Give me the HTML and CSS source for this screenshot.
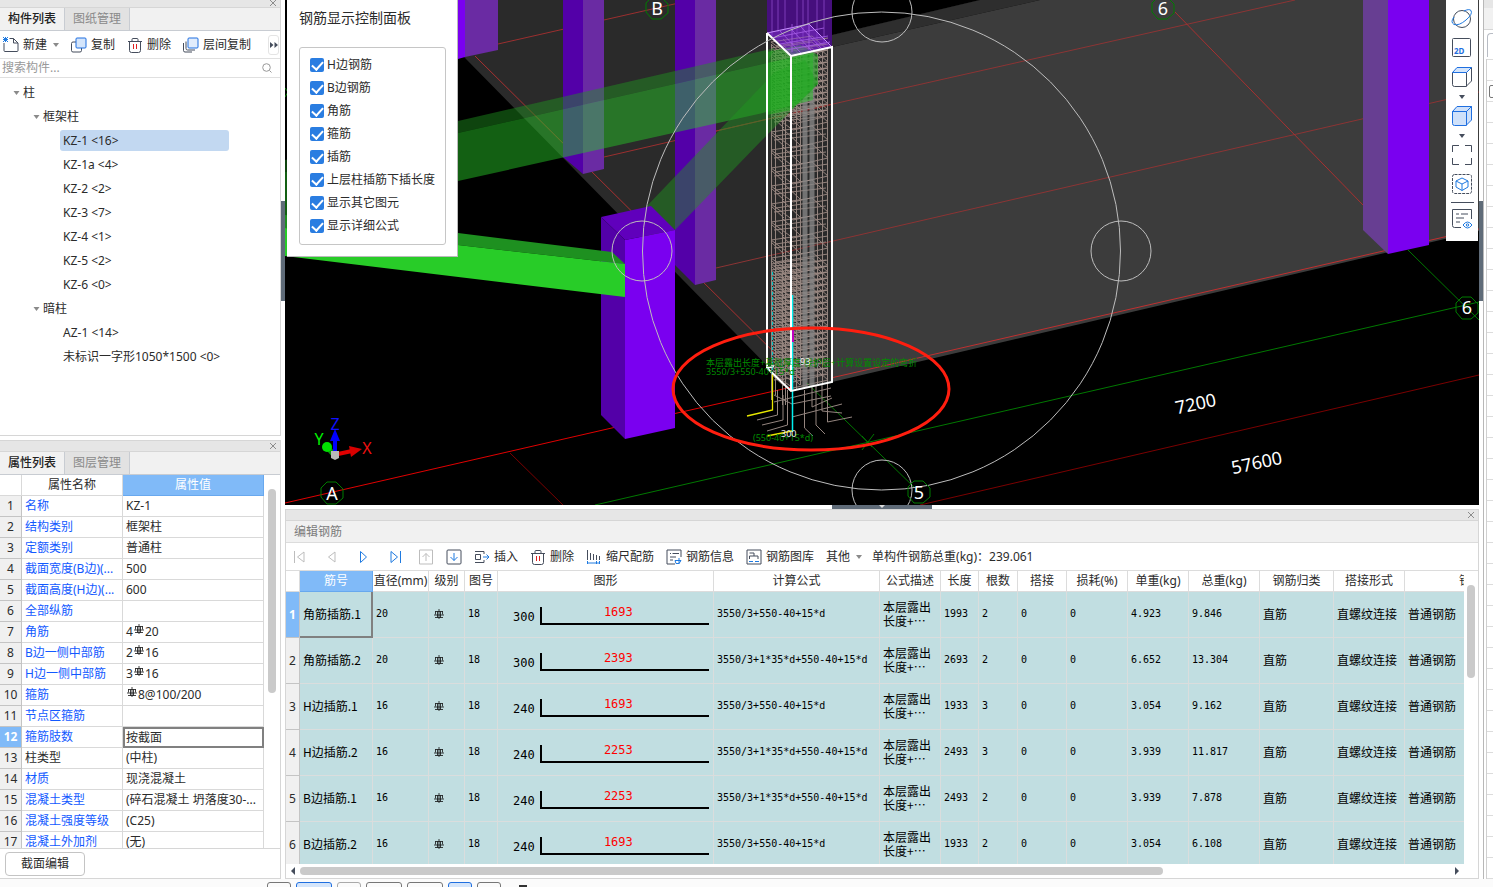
FILE: index.html
```html
<!DOCTYPE html>
<html lang="zh-CN">
<head>
    <meta charset="UTF-8">
    <meta name="viewport" content="width=device-width, initial-scale=1.0">
    <title>编辑钢筋</title>
    <link rel="stylesheet" href="styles.css">
</head>
<body>

    <!-- shared icons -->
    <svg class="defs" xmlns="http://www.w3.org/2000/svg">
        <symbol id="i-close" viewBox="0 0 8 8"><path d="M1 1l6 6M7 1l-6 6" stroke="#8c8c8c" fill="none"/></symbol>
        <symbol id="i-trash" viewBox="0 0 16 16"><path d="M1 4.500h14M5 4V2.500q0-1 1-1h4q1 0 1 1V4M2.500 4.500v9q0 2 2 2h7q2 0 2-2v-9" fill="none" stroke="#454d5c"/><path d="M6.500 7v5M9.500 7v5" stroke="#e02020"/></symbol>
        <symbol id="i-rebar" viewBox="0 0 10 10"><path d="M5 0v10M1 2.500h8M1.500 2.500v3M8.500 2.500v3M0 6h10M1 8.500h8M3.500 2.500v6M6.500 2.500v6" fill="none" stroke="#111" stroke-width=".8"/></symbol>
        <symbol id="i-down" viewBox="0 0 6 4"><path d="M0 0h6L3 4z" fill="#8a8a8a"/></symbol>
    </svg>

    <div class="main">
        <div class="left">
            <div class="dock dock-list">
                <div class="dock-title dock-title-cut"><button class="close" aria-label="关闭"><svg><use href="#i-close"/></svg></button></div>
                <div class="tabs">
                    <button class="tab active">构件列表</button>
                    <button class="tab">图纸管理</button>
                </div>
                <div class="list-tools">
                    <button><svg viewBox="0 0 16 16"><path d="M6.500 1.500h4l4.500 4.500v7.500q0 1-1 1H2q-1 0-1-1V6M10.500 1.500V6H15" fill="none" stroke="#454d5c"/><path d="M0 0l5 5M5 0L0 5M2.500 0v5M0 2.500h5" stroke="#1f7ae0"/></svg>新建<svg class="arrow"><use href="#i-down"/></svg></button>
                    <button><svg viewBox="0 0 16 16"><path d="M5 5H2q-1.500 0-1.500 1.500v7Q.5 15 2 15h7q1.500 0 1.500-1.500V11" fill="none" stroke="#454d5c"/><rect x="5" y="1" width="10" height="10" rx="1" fill="#d4e5fb" stroke="#1f6fe0"/></svg>复制</button>
                    <button><svg><use href="#i-trash"/></svg>删除</button>
                    <button><svg viewBox="0 0 16 16"><path d="M3 4.500v7q0 1.500 1.500 1.500H12M.5 6v7.500Q.5 15 2 15h7" fill="none" stroke="#454d5c"/><rect x="5" y="1" width="10" height="10" rx="1" fill="#e2edfc" stroke="#1f6fe0"/></svg>层间复制</button>
                    <button class="more" aria-label="更多"><svg viewBox="0 0 8 6"><path d="M0 0l3.500 3L0 6zM4.500 0L8 3 4.500 6z" fill="#454d5c"/></svg></button>
                </div>
                <div class="search">
                    <input type="text" placeholder="搜索构件..." aria-label="搜索构件">
                    <svg viewBox="0 0 10 10"><circle cx="4.500" cy="4.500" r="3.800"/><path d="M7.500 7.500L9.500 9.500"/></svg>
                </div>
                <ul class="tree">
                    <li class="level1"><svg><use href="#i-down"/></svg>柱</li>
                    <li class="level2"><svg><use href="#i-down"/></svg>框架柱</li>
                    <li class="level3"><span class="selected">KZ-1 &lt;16&gt;</span></li>
                    <li class="level3"><span>KZ-1a &lt;4&gt;</span></li>
                    <li class="level3"><span>KZ-2 &lt;2&gt;</span></li>
                    <li class="level3"><span>KZ-3 &lt;7&gt;</span></li>
                    <li class="level3"><span>KZ-4 &lt;1&gt;</span></li>
                    <li class="level3"><span>KZ-5 &lt;2&gt;</span></li>
                    <li class="level3"><span>KZ-6 &lt;0&gt;</span></li>
                    <li class="level2"><svg><use href="#i-down"/></svg>暗柱</li>
                    <li class="level3"><span>AZ-1 &lt;14&gt;</span></li>
                    <li class="level3"><span>未标识一字形1050*1500 &lt;0&gt;</span></li>
                </ul>
            </div>

            <div class="dock dock-props">
                <div class="dock-title"><button class="close" aria-label="关闭"><svg><use href="#i-close"/></svg></button></div>
                <div class="tabs">
                    <button class="tab active">属性列表</button>
                    <button class="tab">图层管理</button>
                </div>
                <div class="props-body">
                    <table class="props">
                        <thead>
                            <tr><th class="num"></th><th class="name">属性名称</th><th class="value">属性值</th></tr>
                        </thead>
                        <tbody>
                            <tr><th>1</th><td>名称</td><td>KZ-1</td></tr>
                            <tr><th>2</th><td>结构类别</td><td>框架柱</td></tr>
                            <tr><th>3</th><td>定额类别</td><td>普通柱</td></tr>
                            <tr><th>4</th><td>截面宽度(B边)(...</td><td>500</td></tr>
                            <tr><th>5</th><td>截面高度(H边)(...</td><td>600</td></tr>
                            <tr><th>6</th><td>全部纵筋</td><td></td></tr>
                            <tr><th>7</th><td>角筋</td><td>4<svg class="rebar"><use href="#i-rebar"/></svg>20</td></tr>
                            <tr><th>8</th><td>B边一侧中部筋</td><td>2<svg class="rebar"><use href="#i-rebar"/></svg>16</td></tr>
                            <tr><th>9</th><td>H边一侧中部筋</td><td>3<svg class="rebar"><use href="#i-rebar"/></svg>16</td></tr>
                            <tr><th>10</th><td>箍筋</td><td><svg class="rebar"><use href="#i-rebar"/></svg>8@100/200</td></tr>
                            <tr><th>11</th><td>节点区箍筋</td><td></td></tr>
                            <tr class="current"><th>12</th><td>箍筋肢数</td><td>按截面</td></tr>
                            <tr class="fixed"><th>13</th><td>柱类型</td><td>(中柱)</td></tr>
                            <tr><th>14</th><td>材质</td><td>现浇混凝土</td></tr>
                            <tr><th>15</th><td>混凝土类型</td><td>(碎石混凝土 坍落度30-...</td></tr>
                            <tr><th>16</th><td>混凝土强度等级</td><td>(C25)</td></tr>
                            <tr><th>17</th><td>混凝土外加剂</td><td>(无)</td></tr>
                        </tbody>
                    </table>
                    <div class="vscroll"><div class="thumb props-thumb"></div></div>
                </div>
                <div class="props-footer"><button>截面编辑</button></div>
            </div>
        </div>

        <div class="splitter"><div class="handle"></div></div>

        <div class="center">
            <div class="viewport">
                <svg class="scene" viewBox="285 0 1194 505" preserveAspectRatio="xMinYMin slice">
                    <!-- slabs -->
                    <path d="M408 0L792 391L832 382V35L980 0z" fill="#2a2a2a"/>
                    <path d="M832 35L980 0H832z" fill="#000"/>
                    <path d="M832 35L980 0H1040L832 47z" fill="#2e2e2e"/>
                    <path d="M832 47L1040 0H1479V231L832 382z" fill="#3c3c3c"/>

                    <!-- axis grid -->
                    <g fill="none" stroke="#a83030">
                        <path d="M498 44L692 0M604 157L833 104" stroke-width=".9"/>
                        <path d="M833 104L1295 0M716 268L1479 92M833 104L716 131" stroke="#8c3434"/>
                        <path d="M475 56L800 378M1175 12L1363 205"/>
                        <path d="M285 503L675 413.500L792 387" stroke="#e00000"/>
                        <path d="M833 377.500L1479 229" stroke="#c03030"/>
                        <path d="M510 453L563 505M920 505L1479 375" stroke="#7a0000"/>
                    </g>
                    <g fill="none" stroke="#007800">
                        <path d="M595 505L1479 302M807 383L919 492M1408 250L1479 320M862 450L874 434M862 436L872 447"/>
                    </g>

                    <!-- columns behind -->
                    <path d="M458 0H465V57L458 59z" fill="#7a00f0"/>
                    <path d="M465 0H498V50L465 57z" fill="#6a2ba3"/>
                    <path d="M563 0H583V174L563 157z" fill="#5300a8"/>
                    <path d="M583 0H604V169L583 174z" fill="#6a2ba3"/>
                    <path d="M675 0H695V285L675 265z" fill="#5300a8"/>
                    <path d="M695 0H716V280L695 285z" fill="#6a2ba3"/>
                    <path d="M1363 0H1388V254L1363 230z" fill="#673e92"/>
                    <path d="M1388 0H1429V245L1388 254z" fill="#7a00f0"/>

                    <!-- reinforcement cage -->
                    <path d="M767 0H832V47L791 56L767 33z" fill="#4b0a8c" fill-opacity=".85"/>
                    <path d="M772 0V36M778 0V32M785 0V30M797 0V50M803 0V50M808 0V24M817 0V45M824 0V44" stroke="#8a48c8" fill="none" stroke-width=".8"/>
                    <g id="hoops" fill="none" stroke="#a18d86" stroke-opacity=".9"></g>
                    <g fill="none" stroke="#94857f">
                        <path d="M771.500 45V400M775.500 50V395M782.500 55V405M785.500 55V405M796.500 56V390M800.500 54V385M817.500 50V384M822.500 50V383M827.500 50V382"/>
                        <path d="M805 54V388M812 52V386" stroke-width="5" stroke="#858585" stroke-opacity=".8"/>
                        <path d="M777.500 390V415L757 420M783 395V420L762 425M787.500 390V425L767 431M804.500 390V428L813 436M816 385V425L825 434M822 385V411L842 413M827.500 380V422L852 417M812 385V407L832 398M792 417L842 404M774 402L831 388M774 395L792 404L831 396"/>
                    </g>

                    <!-- beams -->
                    <path d="M285 160L458 121L775 48L767 63L458 133L285 172z" fill="#209620" fill-opacity=".45"/>
                    <path d="M285 172L458 133L767 63L813 53V100L767 112L458 181L285 220z" fill="#28c828" fill-opacity=".48"/>
                    <path d="M645 208L775 72L805 60L818 84L767 135L675 230L662 219z" fill="#209620" fill-opacity=".45"/>
                    <path d="M767 52L800 45L818 55V84L791 110L767 115z" fill="#20b020" fill-opacity=".55"/>

                    <!-- front column and beam -->
                    <path d="M601 217L651 206L675 230L625 240z" fill="#6000bc"/>
                    <path d="M601 217L625 240V439L601 415z" fill="#5300a8"/>
                    <path d="M285 215L458 233L612 252L625 264L458 245L285 228z" fill="#1e9020"/>
                    <path d="M285 228L458 245L625 264V297L285 256z" fill="#28cc28"/>
                    <path d="M625 240L675 230V428L625 439z" fill="#7a00f0"/>

                    <!-- selected bar and column outline -->
                    <path d="M772.500 272V372" stroke="#00c8c8" stroke-dasharray="3 2"/>
                    <path d="M792.500 295V432" stroke="#00f0f0" stroke-width="1.500"/>
                    <path d="M793 330V342" stroke="#c000c0" stroke-width="2"/>
                    <path d="M772.500 372V410L747 416M767 436L792 431" stroke="#e8e800" fill="none" stroke-width="1.300"/>
                    <path d="M767 33L809 24L832 47L791 56z" fill="#8030d0" fill-opacity=".5" stroke="#c890ff"/>
                    <path d="M772 38L824 28M780 44L828 36M786 50L830 42M779 30L801 53M790 28L812 51M800 26L822 49M792 24V52M809 24V50" fill="none" stroke="#a860e8" stroke-width=".8"/>
                    <path d="M767 33V368L791 391L832 382V47L791 56L767 33M791 56V391M767 368L774 366" fill="none" stroke="#fff" stroke-width="2"/>

                    <g class="note">
                        <text x="706" y="366">本层露出长度+基础厚度-保护层+计算设置设定的弯折</text>
                        <text x="706" y="375">3550/3+550-40+15*d</text>
                        <text x="753" y="441">(550-40+15*d)</text>
                        <text class="light" x="781" y="437">300</text>
                        <text class="light" x="800" y="365">93</text>
                    </g>

                    <!-- orbit control -->
                    <g fill="none" stroke="#bdbdbd">
                        <circle cx="881.500" cy="251" r="239"/>
                        <circle cx="882" cy="12" r="30"/>
                        <circle cx="642" cy="251" r="30"/>
                        <circle cx="1121" cy="251" r="30"/>
                        <circle cx="882" cy="490" r="30"/>
                    </g>
                    <ellipse cx="811" cy="389" rx="138" ry="61" fill="none" stroke="#ff1e0f" stroke-width="3"/>

                    <!-- axis labels -->
                    <g fill="none" stroke="#007d00">
                        <path id="bubble" d="M-5 -11H4L11 -4V5L4 11H-5L-11 4V-5z" transform="translate(332 493)"/>
                        <use href="#bubble" x="325" y="-485"/>
                        <use href="#bubble" x="831" y="-485"/>
                        <use href="#bubble" x="587" y="-1"/>
                        <use href="#bubble" x="1135" y="-185"/>
                        <path d="M285 88l3 4-3 5"/>
                    </g>
                    <g class="axis">
                        <text x="332" y="500">A</text>
                        <text x="657" y="15">B</text>
                        <text x="1163" y="15">6</text>
                        <text x="919" y="499">5</text>
                        <text x="1467" y="314">6</text>
                        <text transform="translate(1197 410) rotate(-12)">7200</text>
                        <text transform="translate(1258 469) rotate(-12)">57600</text>
                    </g>

                    <!-- ucs -->
                    <path d="M334 455L328 448" stroke="#0a9a0a" stroke-width="5"/>
                    <circle cx="327" cy="447" r="5" fill="#00e000"/>
                    <path d="M338 454L352 451" stroke="#e00000" stroke-width="4"/>
                    <path d="M349 446L362 449L351 457z" fill="#d80000"/>
                    <path d="M335 452V440" stroke="#0000ff" stroke-width="4"/>
                    <path d="M330 441L335 429L340 441z" fill="#0000ff"/>
                    <path d="M331 451h8v7l-4 2-4-2z" fill="#b8b8b8"/>
                    <g class="ucs">
                        <text x="335" y="430" fill="#1010ff">Z</text>
                        <text x="319" y="445" fill="#00f000">Y</text>
                        <text x="367" y="454" fill="#f01010">X</text>
                    </g>
                </svg>

                <div class="display-panel">
                    <h2>钢筋显示控制面板</h2>
                    <div class="options">
                        <label><input type="checkbox" checked>H边钢筋</label>
                        <label><input type="checkbox" checked>B边钢筋</label>
                        <label><input type="checkbox" checked>角筋</label>
                        <label><input type="checkbox" checked>箍筋</label>
                        <label><input type="checkbox" checked>插筋</label>
                        <label><input type="checkbox" checked>上层柱插筋下插长度</label>
                        <label><input type="checkbox" checked>显示其它图元</label>
                        <label><input type="checkbox" checked>显示详细公式</label>
                    </div>
                </div>

                <div class="view-tools">
                    <button aria-label="动态观察"><svg viewBox="0 0 22 22" fill="none"><circle cx="11" cy="11" r="8.500" stroke="#454d5c"/><path d="M3 9Q-1 14 3 16.500Q8 18 15 12Q22 6 20 2.500Q18 .5 13 3" stroke="#1f7ae0"/></svg></button>
                    <button aria-label="二维"><svg viewBox="0 0 22 22"><rect x="1.500" y="1.500" width="18" height="18" rx="1" fill="none" stroke="#454d5c"/><text x="3" y="17">2D</text></svg></button>
                    <button aria-label="视图"><svg viewBox="0 0 22 22" fill="none"><path d="M1.500 6.500h14v14h-12q-2 0-2-2zM15.500 20L20.500 15V1.500L15.500 6.500" stroke="#454d5c"/><path d="M1.500 6.500l4.500-5h14.500l-5 5z" fill="#d4e5fb" stroke="#1f6fe0"/></svg></button>
                    <svg class="drop" viewBox="0 0 6 4"><path d="M0 0h6L3 4z"/></svg>
                    <button aria-label="实体显示"><svg viewBox="0 0 22 22" fill="#cfe1fa" stroke="#1f6fe0"><path d="M1.500 6.500h14v14h-12q-2 0-2-2zM15.500 20L20.500 15V1.500L15.500 6.500zM1.500 6.500l4.500-5h14.500l-5 5z"/></svg></button>
                    <svg class="drop" viewBox="0 0 6 4"><path d="M0 0h6L3 4z"/></svg>
                    <button aria-label="全屏"><svg viewBox="0 0 22 22"><path d="M1.500 8V1.500H8M14 1.500h6.500V8M20.500 14v6.500H14M8 20.500H1.500V14" fill="none" stroke="#454d5c"/></svg></button>
                    <button aria-label="局部三维"><svg viewBox="0 0 22 22" fill="none"><rect x="1.500" y="1.500" width="19" height="19" rx="2" stroke="#454d5c" stroke-dasharray="3 1"/><path d="M11 5l6 3v6l-6 3.500L5 14V8zM5 8l6 3 6-3M11 11v6.500" stroke="#1f7ae0"/></svg></button>
                    <div class="rule"></div>
                    <button aria-label="显示设置"><svg viewBox="0 0 22 22" fill="none"><path d="M20.500 11V1.500h-19v16q0 2 2 2H10M5 6h3M10 6h7M5 10h8M5 14h4" stroke="#454d5c"/><path d="M12 17q4.500-6 9 0-4.500 6-9 0z" stroke="#1f7ae0"/><circle cx="16.500" cy="17" r="1.200" stroke="#1f7ae0"/></svg></button>
                </div>
            </div>

            <div class="hsplitter"><div class="handle"><svg viewBox="0 0 6 4"><path d="M0 0h6L3 3z" fill="#ddd"/></svg></div></div>

            <div class="dock dock-edit">
                <div class="dock-title"><button class="close" aria-label="关闭"><svg><use href="#i-close"/></svg></button></div>
                <div class="edit-title">编辑钢筋</div>
                <div class="edit-tools">
                    <div class="nav">
                        <button disabled aria-label="首行"><svg viewBox="0 0 16 16"><path d="M2.500 2v12M12 3v10L5.500 8z"/></svg></button>
                        <button disabled aria-label="上一行"><svg viewBox="0 0 16 16"><path d="M11 3v10L4.500 8z"/></svg></button>
                        <button aria-label="下一行"><svg viewBox="0 0 16 16"><path d="M4.500 2.500v11L10.500 8z"/></svg></button>
                        <button aria-label="末行"><svg viewBox="0 0 16 16"><path d="M3 2.500v11L9.500 8zM12.500 2v12"/></svg></button>
                    </div>
                    <div class="move">
                        <button disabled aria-label="上移"><svg viewBox="0 0 16 16"><path d="M1.500 1h13v14h-13zM8 12V4.500M4.500 8L8 4.500 11.500 8"/></svg></button>
                        <button aria-label="下移"><svg viewBox="0 0 16 16"><rect class="frame" x="1" y="1" width="14" height="14" rx="1"/><path d="M8 4v7.500M4.500 8L8 11.500 11.500 8"/></svg></button>
                    </div>
                    <button><svg viewBox="0 0 16 16" fill="none"><path d="M1 2.500h9M10 2.500V5M1.500 5.500h5v5h-5zM1 13.500h9V11" stroke="#454d5c"/><path d="M9 8h6M12.500 5.500L15 8l-2.500 2.500" stroke="#1f7ae0"/></svg>插入</button>
                    <button><svg><use href="#i-trash"/></svg>删除</button>
                    <button><svg viewBox="0 0 16 16" fill="none"><path d="M1.500 1v10M4.500 4v7M7.500 5v6M10.500 6v5M13.500 7v4" stroke="#454d5c"/><path d="M1 14h13M1.500 12v3M10.500 12v3M13.500 12v3" stroke="#1f7ae0"/></svg>缩尺配筋</button>
                    <button><svg viewBox="0 0 16 16" fill="none"><path d="M15 8V1H1v14h8M4 4.500h1M6.500 4.500H13M4 8h6M4 11h3" stroke="#454d5c"/><path d="M9 11.500h6M15 11.500l-2 3h-3l-1-3M13 9v6" stroke="#1f7ae0"/></svg>钢筋信息</button>
                    <button><svg viewBox="0 0 16 16" fill="none"><path d="M1 1h14v14H1zM3.500 4H8v3H3.500v3M8 7h4v3" stroke="#454d5c"/><path d="M3 12.500h4M9 12.500h4" stroke="#1f7ae0"/></svg>钢筋图库</button>
                    <button class="other">其他<svg class="arrow"><use href="#i-down"/></svg></button>
                    <span class="total">单构件钢筋总重(kg)：239.061</span>
                </div>
                <div class="edit-body">
                    <div class="bars-wrap">
                        <table class="bars">
                            <colgroup>
                                <col class="w-num"><col class="w-name"><col class="w-dia"><col class="w-grade"><col class="w-fig"><col class="w-shape"><col class="w-calc"><col class="w-desc"><col class="w-len"><col class="w-count"><col class="w-lap"><col class="w-loss"><col class="w-unit"><col class="w-total"><col class="w-class"><col class="w-joint"><col class="w-type">
                            </colgroup>
                            <thead>
                                <tr><th></th><th class="on">筋号</th><th>直径(mm)</th><th>级别</th><th>图号</th><th>图形</th><th>计算公式</th><th>公式描述</th><th>长度</th><th>根数</th><th>搭接</th><th>损耗(%)</th><th>单重(kg)</th><th>总重(kg)</th><th>钢筋归类</th><th>搭接形式</th><th>钢筋类型</th></tr>
                            </thead>
                            <tbody>
                                <tr class="current"><th>1</th><td class="name">角筋插筋.1</td><td>20</td><td class="grade"><svg class="rebar"><use href="#i-rebar"/></svg></td><td>18</td><td><div class="shape"><span>300</span><b>1693</b></div></td><td>3550/3+550-40+15*d</td><td class="cn desc">本层露出<br>长度+⋯</td><td>1993</td><td>2</td><td>0</td><td>0</td><td>4.923</td><td>9.846</td><td class="cn">直筋</td><td class="cn">直螺纹连接</td><td class="cn">普通钢筋</td></tr>
                                <tr><th>2</th><td class="name">角筋插筋.2</td><td>20</td><td class="grade"><svg class="rebar"><use href="#i-rebar"/></svg></td><td>18</td><td><div class="shape"><span>300</span><b>2393</b></div></td><td>3550/3+1*35*d+550-40+15*d</td><td class="cn desc">本层露出<br>长度+⋯</td><td>2693</td><td>2</td><td>0</td><td>0</td><td>6.652</td><td>13.304</td><td class="cn">直筋</td><td class="cn">直螺纹连接</td><td class="cn">普通钢筋</td></tr>
                                <tr><th>3</th><td class="name">H边插筋.1</td><td>16</td><td class="grade"><svg class="rebar"><use href="#i-rebar"/></svg></td><td>18</td><td><div class="shape"><span>240</span><b>1693</b></div></td><td>3550/3+550-40+15*d</td><td class="cn desc">本层露出<br>长度+⋯</td><td>1933</td><td>3</td><td>0</td><td>0</td><td>3.054</td><td>9.162</td><td class="cn">直筋</td><td class="cn">直螺纹连接</td><td class="cn">普通钢筋</td></tr>
                                <tr><th>4</th><td class="name">H边插筋.2</td><td>16</td><td class="grade"><svg class="rebar"><use href="#i-rebar"/></svg></td><td>18</td><td><div class="shape"><span>240</span><b>2253</b></div></td><td>3550/3+1*35*d+550-40+15*d</td><td class="cn desc">本层露出<br>长度+⋯</td><td>2493</td><td>3</td><td>0</td><td>0</td><td>3.939</td><td>11.817</td><td class="cn">直筋</td><td class="cn">直螺纹连接</td><td class="cn">普通钢筋</td></tr>
                                <tr><th>5</th><td class="name">B边插筋.1</td><td>16</td><td class="grade"><svg class="rebar"><use href="#i-rebar"/></svg></td><td>18</td><td><div class="shape"><span>240</span><b>2253</b></div></td><td>3550/3+1*35*d+550-40+15*d</td><td class="cn desc">本层露出<br>长度+⋯</td><td>2493</td><td>2</td><td>0</td><td>0</td><td>3.939</td><td>7.878</td><td class="cn">直筋</td><td class="cn">直螺纹连接</td><td class="cn">普通钢筋</td></tr>
                                <tr><th>6</th><td class="name">B边插筋.2</td><td>16</td><td class="grade"><svg class="rebar"><use href="#i-rebar"/></svg></td><td>18</td><td><div class="shape"><span>240</span><b>1693</b></div></td><td>3550/3+550-40+15*d</td><td class="cn desc">本层露出<br>长度+⋯</td><td>1933</td><td>2</td><td>0</td><td>0</td><td>3.054</td><td>6.108</td><td class="cn">直筋</td><td class="cn">直螺纹连接</td><td class="cn">普通钢筋</td></tr>
                            </tbody>
                        </table>
                    </div>
                    <div class="vscroll"><div class="thumb bars-thumb"></div></div>
                </div>
                <div class="hscroll">
                    <svg viewBox="0 0 4 8"><path d="M4 0v8L0 4z"/></svg>
                    <div class="track"><div class="thumb"></div></div>
                    <svg viewBox="0 0 4 8"><path d="M0 0v8l4-4z"/></svg>
                </div>
            </div>
        </div>

        <div class="splitter"><div class="handle"></div></div>

        <div class="right">
            <div class="right-title"></div>
            <div class="right-tab"><span></span></div>
            <div class="right-rows"><input type="checkbox" aria-label="图层"></div>
        </div>
    </div>

    <div class="status">
        <button aria-label="状态"></button>
        <button class="on wide" aria-label="正交"></button>
        <button class="dim" aria-label="捕捉"></button>
        <button class="wide" aria-label="交点"></button>
        <button class="wide" aria-label="垂点"></button>
        <button class="on" aria-label="中点"></button>
        <button aria-label="顶点"></button>
        <i></i>
    </div>

    <script>
        // draw the stirrups: dense at both ends, wider in the middle
        const hoops = document.getElementById("hoops");
        let y = 42;
        let d = "";
        while (y < 376) {
            d += `M771 ${y}L793 ${y + 16}L828 ${y + 8}L812 ${y - 6}Z`;
            d += `M776 ${y + 4}L828 ${y - 4}M783 ${y - 3}L800 ${y + 13}`;
            d += `M774 ${y + 8}L826 ${y + 2}M771 ${y + 2}L784 ${y + 14}`;
            y += (y < 112 || y > 250) ? 6 : 18;
        }
        const path = document.createElementNS("http://www.w3.org/2000/svg", "path");
        path.setAttribute("d", d);
        hoops.appendChild(path);
    </script>

</body>
</html>
```

FILE: styles.css
```css
* {
    margin: 0;
    padding: 0;
    box-sizing: border-box;
}

body {
    display: flex;
    flex-direction: column;
    height: 100vh;
    overflow: hidden;
    background: #fff;
    color: #2b2b2b;
    font-family: "Noto Sans", "Noto Sans CJK SC", sans-serif;
    font-size: 12px;
    line-height: 20px;
}

button,
input {
    font: inherit;
    color: inherit;
    border: none;
    background: none;
}

.defs {
    position: absolute;
    width: 0;
    height: 0;
}

.main {
    display: flex;
    flex: 1;
    min-height: 0;
}

/* docks */
.left {
    display: flex;
    flex-direction: column;
    gap: 4px;
    width: 281px;
}

.dock {
    display: flex;
    flex-direction: column;
    border: 1px solid #d6d6d6;
    border-left: none;
    min-height: 0;
}

.dock-list {
    flex: 0 0 436px;
    border-top: none;
}

.dock-props {
    flex: 1;
}

.dock-title {
    display: flex;
    justify-content: flex-end;
    align-items: center;
    flex: none;
    height: 11px;
    padding-right: 3px;
    background: #e6e6e6;
    border-bottom: 1px solid #d6d6d6;
}

.dock-title-cut {
    height: 8px;
    align-items: flex-end;
}

.close {
    display: flex;
}

.close svg {
    width: 8px;
    height: 8px;
}

.tabs {
    display: flex;
    flex: none;
    height: 23px;
    background: #f1f1f1;
    border-bottom: 1px solid #c8ccd2;
}

.tab {
    width: 65px;
    color: #8a8a8a;
    background: #e2e2e2;
    border-right: 1px solid #c8ccd2;
    line-height: 22px;
}

.tab.active {
    color: #222;
    background: #f1f1f1;
    font-weight: 500;
}

.list-tools {
    display: flex;
    align-items: center;
    gap: 12px;
    flex: none;
    height: 28px;
    padding: 0 1px 0 3px;
    border-bottom: 1px solid #e0e0e0;
}

.list-tools button,
.edit-tools button {
    display: flex;
    align-items: center;
    gap: 4px;
    white-space: nowrap;
}

.list-tools svg,
.edit-tools svg {
    width: 16px;
    height: 16px;
    flex: none;
}

.list-tools .arrow,
.edit-tools .arrow {
    width: 6px;
    height: 4px;
    margin-left: 2px;
}

.list-tools .more {
    justify-content: center;
    width: 11px;
    height: 20px;
    margin-left: auto;
    border: 1px solid #e4e4e4;
    border-radius: 3px;
}

.list-tools .more svg {
    width: 8px;
    height: 6px;
}

.search {
    display: flex;
    align-items: center;
    flex: none;
    height: 19px;
    padding: 0 8px 0 2px;
    border-bottom: 1px solid #e0e0e0;
}

.search input {
    flex: 1;
    min-width: 0;
    height: 18px;
    outline: none;
}

.search input::placeholder {
    color: #999;
}

.search svg {
    width: 10px;
    height: 10px;
    fill: none;
    stroke: #999;
}

.tree {
    padding-top: 3px;
    list-style: none;
}

.tree li {
    display: flex;
    align-items: center;
    height: 24px;
}

.tree svg {
    width: 7px;
    height: 4px;
    margin-right: 3px;
}

.tree .level1 {
    padding-left: 13px;
}

.tree .level2 {
    padding-left: 33px;
}

.tree .level3 {
    padding-left: 60px;
    align-items: flex-start;
}

.tree span {
    padding: 0 3px;
    margin-top: 1px;
    line-height: 21px;
}

.tree .selected {
    width: 169px;
    background: #c2d8f1;
    border-radius: 3px;
}

/* property table */
.props-body {
    display: flex;
    flex: 1;
    min-height: 0;
    overflow: hidden;
    border-bottom: 1px solid #d6d6d6;
}

table {
    border-collapse: separate;
    border-spacing: 0;
    table-layout: fixed;
}

.props {
    width: 264px;
    height: max-content;
}

.props th,
.props td {
    height: 21px;
    overflow: hidden;
    white-space: nowrap;
    border-right: 1px solid #d9d9d9;
    border-bottom: 1px solid #d9d9d9;
    font-weight: 400;
    line-height: 20px;
}

.props td {
    padding-left: 3px;
}

.props td:nth-child(2) {
    color: #1259ff;
}

.props .fixed td:nth-child(2) {
    color: #2b2b2b;
}

.props .num {
    width: 22px;
}

.props .name {
    width: 101px;
}

.props thead .value {
    background: #80baf8;
    border-color: #68a8ee;
    color: #fff;
}

.props tbody th {
    background: #f0f0f0;
    border-color: #c4c4c4;
}

.props .current th {
    background: #80baf8;
    color: #fff;
    font-weight: 700;
}

.props .current td:last-child {
    border: none;
    outline: 2px solid #808080;
    outline-offset: -2px;
}

.rebar {
    width: 10px;
    height: 10px;
    margin: 0 1px;
}

.props .rebar {
    vertical-align: 2px;
}

.vscroll {
    flex: 1;
    display: flex;
    justify-content: center;
}

.thumb {
    background: #cacaca;
    border-radius: 4px;
}

.props-thumb {
    width: 8px;
    height: 204px;
    margin-top: 14px;
}

.props-footer {
    flex: none;
    height: 29px;
    padding: 3px 5px;
}

.props-footer button {
    width: 80px;
    height: 24px;
    border: 1px solid #c4c4c4;
    border-radius: 4px;
}

/* splitters */
.splitter {
    width: 4px;
    flex: none;
    padding-top: 201px;
}

.splitter .handle {
    height: 100px;
    background: #5f6b78;
}

.hsplitter {
    display: flex;
    justify-content: center;
    flex: none;
    height: 4px;
}

.hsplitter .handle {
    display: flex;
    justify-content: center;
    width: 100px;
    background: #5f6b78;
}

.hsplitter svg {
    width: 6px;
    height: 4px;
}

/* viewport */
.center {
    display: flex;
    flex-direction: column;
    flex: 1;
    min-width: 0;
}

.viewport {
    position: relative;
    flex: 1;
    min-height: 0;
    background: #000;
    overflow: hidden;
}

.scene {
    display: block;
    width: 100%;
    height: 100%;
}

.note text {
    font-size: 9px;
    fill: #008a00;
}

.note .light {
    fill: #eee;
}

.axis text {
    font-size: 18px;
    fill: #fff;
    text-anchor: middle;
}

.ucs text {
    font-size: 16px;
    text-anchor: middle;
}

.display-panel {
    position: absolute;
    top: 0;
    left: 2px;
    width: 171px;
    padding: 6px 12px 11px;
    background: #fff;
    border: 1px solid #bbb;
    border-width: 0 1px 1px 0;
}

.display-panel h2 {
    margin-bottom: 17px;
    font-size: 14px;
    font-weight: 400;
    line-height: 24px;
}

.options {
    width: 147px;
    padding: 5px 10px 7px;
    border: 1px solid #c6c6c6;
    border-radius: 3px;
}

.options label {
    display: flex;
    align-items: center;
    gap: 3px;
    height: 23px;
    white-space: nowrap;
}

.options input {
    appearance: none;
    display: flex;
    justify-content: center;
    flex: none;
    width: 14px;
    height: 14px;
    background: #2a7de1;
    border-radius: 2px;
}

.options input:checked::after {
    content: "";
    width: 5px;
    height: 9px;
    margin-top: 1px;
    border: solid #fff;
    border-width: 0 2px 2px 0;
    transform: rotate(42deg);
}

.view-tools {
    position: absolute;
    top: 0;
    right: 1px;
    display: flex;
    flex-direction: column;
    align-items: center;
    width: 32px;
    padding: 8px 0 11px;
    background: #fff;
}

.view-tools button {
    display: flex;
    margin-bottom: 7px;
}

.view-tools button svg {
    width: 22px;
    height: 22px;
}

.view-tools text {
    font-size: 8px;
    font-weight: 700;
    fill: #1f6fe0;
}

.view-tools .drop {
    width: 6px;
    height: 4px;
    margin-bottom: 6px;
    fill: #454d5c;
}

.view-tools .rule {
    width: 23px;
    height: 1px;
    margin-bottom: 5px;
    background: #454d5c;
}

.view-tools button:last-child {
    margin: 0;
}

/* rebar editor */
.dock-edit {
    flex: none;
    height: 370px;
    border-left: 1px solid #d6d6d6;
}

.edit-title {
    flex: none;
    height: 22px;
    padding-left: 8px;
    background: #f1f1f1;
    border-bottom: 1px solid #dcdcdc;
    color: #7c7c7c;
    line-height: 21px;
}

.edit-tools {
    display: flex;
    align-items: center;
    flex: none;
    height: 28px;
    border-bottom: 1px solid #dcdcdc;
}

.edit-tools > button {
    padding: 0 6px;
}

.edit-tools .nav,
.edit-tools .move {
    display: flex;
}

.edit-tools .nav {
    gap: 4px;
    margin-right: 2px;
}

.nav button,
.move button {
    justify-content: center;
    width: 28px;
}

.nav svg,
.move svg {
    fill: none;
    stroke: #1f7ae0;
}

.move .frame {
    stroke: #454d5c;
}

.nav button:disabled svg,
.move button:disabled svg {
    stroke: #bdbdbd;
}

.total {
    margin-left: 4px;
}

.edit-body {
    display: flex;
    flex: 1;
    min-height: 0;
}

.bars-wrap {
    flex: 1;
    min-width: 0;
    overflow: hidden;
}

.edit-body .vscroll {
    flex: none;
    width: 14px;
}

.bars-thumb {
    width: 8px;
    height: 93px;
    margin-top: 14px;
}

.bars {
    width: 1276px;
}

.w-num { width: 14px; }
.w-name { width: 73px; }
.w-dia { width: 56px; }
.w-grade { width: 36px; }
.w-fig { width: 33px; }
.w-shape { width: 216px; }
.w-calc { width: 166px; }
.w-desc { width: 61px; }
.w-len { width: 38px; }
.w-count { width: 39px; }
.w-lap { width: 49px; }
.w-loss { width: 61px; }
.w-unit { width: 61px; }
.w-total { width: 71px; }
.w-class { width: 74px; }
.w-joint { width: 71px; }
.w-type { width: 157px; }

.bars th {
    height: 21px;
    border-right: 1px solid #dcdcdc;
    border-bottom: 1px solid #dcdcdc;
    font-weight: 400;
    line-height: 20px;
    white-space: nowrap;
}

.bars th.on {
    background: #80baf8;
    border-color: #68a8ee;
    color: #fff;
}

.bars tbody th {
    height: 46px;
    background: #f0f0f0;
    border-color: #c4c4c4;
}

.bars .current th {
    background: #80baf8;
    color: #fff;
    font-weight: 700;
}

.bars td {
    height: 46px;
    padding: 0 0 2px 3px;
    background: #c1dee1;
    border-right: 1px solid #dadddd;
    border-bottom: 1px solid #dadddd;
    color: #000;
    font-family: "DejaVu Sans Mono", monospace;
    font-size: 10px;
    line-height: 14px;
    white-space: nowrap;
}

.bars td.name,
.bars td.cn {
    font-family: "Noto Sans CJK SC", sans-serif;
    font-size: 12px;
}

.bars .current .name {
    padding-bottom: 0;
    border-right: 2px solid #808080;
    border-bottom: 2px solid #808080;
}

.bars .grade {
    padding: 2px 0 0 4px;
}

.shape {
    display: flex;
    align-items: flex-end;
    gap: 5px;
    padding: 4px 4px 0 12px;
    font-size: 12px;
}

.shape span {
    padding-bottom: 1px;
}

.shape b {
    flex: 1;
    height: 18px;
    padding-right: 14px;
    border: solid #000;
    border-width: 0 0 2px 2px;
    color: #f00;
    font-weight: 400;
    line-height: 10px;
    text-align: center;
}

.hscroll {
    display: flex;
    align-items: center;
    justify-content: space-between;
    flex: none;
    height: 14px;
    padding: 0 19px 0 5px;
}

.hscroll svg {
    width: 4px;
    height: 8px;
    fill: #454d5c;
}

.hscroll .track {
    flex: 1;
    padding: 0 5px;
}

.hscroll .thumb {
    width: 75%;
    height: 8px;
}

/* right edge */
.right {
    display: flex;
    flex-direction: column;
    width: 10px;
    border-left: 1px solid #b8b8b8;
}

.right-title {
    height: 30px;
    background: linear-gradient(#e6e6e6 8px, #f1f1f1 8px);
    border-bottom: 1px solid #d6d6d6;
}

.right-tab {
    height: 29px;
    padding: 3px 0 0 3px;
}

.right-tab span {
    display: block;
    height: 24px;
    border: 1px solid #b8bcc4;
    border-width: 1px 0 0 1px;
    border-radius: 4px 0 0 0;
}

.right-rows {
    flex: 1;
    margin-left: 2px;
    padding: 25px 0 0 2px;
    overflow: hidden;
    border-left: 1px solid #d0d0d0;
    background: repeating-linear-gradient(#dcdcdc 0 1px, #fff 1px 21px);
}

.right-rows input {
    appearance: none;
    width: 13px;
    height: 13px;
    border: 1px solid #777;
    border-radius: 2px;
}

/* status bar */
.status {
    display: flex;
    flex: none;
    gap: 5px;
    height: 8px;
    padding: 3px 0 0 267px;
    overflow: hidden;
    background: #fbfbfb;
}

.status button {
    width: 24px;
    height: 20px;
    border: 1px solid #777;
    border-radius: 3px;
}

.status .wide {
    width: 36px;
}

.status .on {
    border-color: #1f6fe0;
    background: #d4e5fb;
}

.status .dim {
    border-color: #aaa;
}

.status i {
    width: 8px;
    height: 2px;
    margin: 3px 0 0 13px;
    background: #333;
}
```
